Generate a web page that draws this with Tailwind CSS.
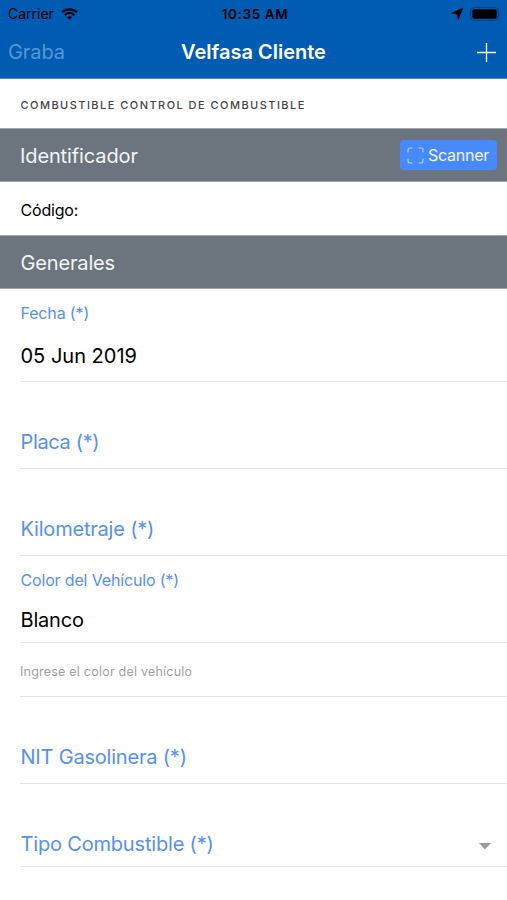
<!DOCTYPE html>
<html lang="es">
<head>
<meta charset="utf-8">
<title>Velfasa Cliente</title>
<script src="https://cdn.jsdelivr.net/npm/@tailwindcss/browser@4"></script>
</head>
<body class="w-[507px] h-[900px] overflow-hidden bg-white font-['Inter','Liberation_Sans',sans-serif] whitespace-nowrap text-black">
<header class="h-[79px] bg-[#005bb3] border-b border-[#3f8fdc]">
  <div class="h-[27px] grid grid-cols-[1fr_auto_1fr] items-center pl-[8px] pr-[6px] pt-px text-[14px] leading-[26px]">
    <div class="flex items-center gap-[7px]">
      <span>Carrier</span>
      <svg class="w-[17px] h-[12px]" viewBox="0 0 17 12" fill="none" stroke="#000" stroke-width="2.2"><path d="M1 4.3C5.2.3 11.800.3 16 4.300M3.700 7.100C6.500 4.500 10.500 4.500 13.300 7.100"/><path d="M8.500 11.800 5.900 9.200Q8.500 7.100 11.100 9.200Z" fill="#000" stroke="none"/></svg>
    </div>
    <span class="pl-[1px] text-[13.5px] font-semibold tracking-[0.6px]">10:35 AM</span>
    <div class="flex items-center justify-end gap-[7px]">
      <svg class="w-[12px] h-[12px]" viewBox="0 0 12 12"><path d="M11.700.300 7.200 11.500 6.200 6 0 5.200Z" stroke="#000" stroke-width=".5"/></svg>
      <svg class="w-[31px] h-[14px]" viewBox="0 0 31 14"><rect x=".6" y=".6" width="27.800" height="12.800" rx="3.500" fill="none" stroke="#003f82" stroke-width="1"/><rect x="2.300" y="2.300" width="24.400" height="9.400" rx="2"/><path d="M29.500 4.800q1.500 2.200 0 4.400z" fill="#003f82"/></svg>
    </div>
  </div>
  <div class="h-[50px] grid grid-cols-[1fr_auto_1fr] items-center pl-[8px] pr-[11px] text-[20px]">
    <span class="text-[#5596d6] tracking-[-0.1px]">Graba</span>
    <h1 class="pl-[3px] font-semibold text-white">Velfasa Cliente</h1>
    <svg class="w-[19px] h-[19px] justify-self-end" viewBox="0 0 19 19" stroke="#fff" stroke-width="1.300"><path d="M0 9.500H19M9.500 0V19"/></svg>
  </div>
</header>
<main>
  <p class="h-[49px] pl-[20.5px] pt-[4px] flex items-center text-[11px] font-medium tracking-[1.46px] text-[#444]">COMBUSTIBLE CONTROL DE COMBUSTIBLE</p>
  <section class="h-[54px] bg-[#6c757d] border-y border-[#a0a6ac] flex items-center justify-between pl-[20px] pr-[10px] text-[#f4f5f8]">
    <h2 class="text-[20px] tracking-[-0.12px] pt-px">Identificador</h2>
    <button class="w-[97px] h-[30px] rounded-[4px] bg-[#4789ff] flex items-center pl-[7px] gap-[4px] text-[16px] tracking-[-0.25px]">
      <svg class="w-[17px] h-[17px] shrink-0" viewBox="0 0 17 17" fill="none" stroke="#b9d2ff" stroke-width="1.100" stroke-linecap="round"><path d="M5 1H3Q1 1 1 3V5M12 1H14Q16 1 16 3V5M5 16H3Q1 16 1 14V12M12 16H14Q16 16 16 14V12"/></svg>
      <span>Scanner</span>
    </button>
  </section>
  <div class="h-[53px] pl-[20.5px] pt-[3px] flex items-center text-[16px] tracking-[-0.2px]">Código:</div>
  <section class="h-[54px] bg-[#6c757d] border-y border-[#a0a6ac] flex items-center pl-[20.5px] text-[#f4f5f8]"><h2 class="text-[20px] tracking-[-0.15px] pt-px">Generales</h2></section>
  <div class="ml-[20px] border-b border-[#e4e4e4] h-[93px] pt-[14px] pl-[0.5px]">
    <div class="text-[16px] leading-[20px] tracking-[-0.15px] text-[#5690f5]">Fecha (*)</div>
    <div class="mt-[20px] text-[20px] leading-[26px]">05 Jun 2019</div>
  </div>
  <div class="ml-[20px] border-b border-[#e4e4e4] h-[87px] pt-[47px] pl-[0.5px] text-[20px] leading-[26px] tracking-[-0.35px] text-[#5690f5]">Placa (*)</div>
  <div class="ml-[20px] border-b border-[#e4e4e4] h-[87px] pt-[47px] pl-[0.5px] text-[20px] leading-[26px] tracking-[-0.2px] text-[#5690f5]">Kilometraje (*)</div>
  <div class="ml-[20px] border-b border-[#e4e4e4] h-[87px] pt-[14px] pl-[0.5px]">
    <div class="text-[16px] leading-[20px] tracking-[-0.16px] text-[#5690f5]">Color del Vehículo (*)</div>
    <div class="mt-[17px] text-[20px] leading-[26px] tracking-[-0.2px]">Blanco</div>
  </div>
  <div class="ml-[20px] border-b border-[#e4e4e4] h-[54px] flex items-center pt-[5px] text-[12.500px] tracking-[0.22px] text-[#a0a0a0]">Ingrese el color del vehículo</div>
  <div class="ml-[20px] border-b border-[#e4e4e4] h-[87px] pt-[47px] pl-[0.5px] text-[20px] leading-[26px] tracking-[-0.2px] text-[#5690f5]">NIT Gasolinera (*)</div>
  <div class="ml-[20px] border-b border-[#e4e4e4] h-[83px] pt-[47px] pl-[0.5px] pr-[16px] flex items-start justify-between text-[20px] leading-[26px] tracking-[-0.18px] text-[#5690f5]">
    <span>Tipo Combustible (*)</span>
    <svg class="w-[12px] h-[7px] mt-[12px]" viewBox="0 0 12 7"><path d="M0 0H12L6 6.500Z" fill="#999"/></svg>
  </div>
</main>
</body>
</html>
